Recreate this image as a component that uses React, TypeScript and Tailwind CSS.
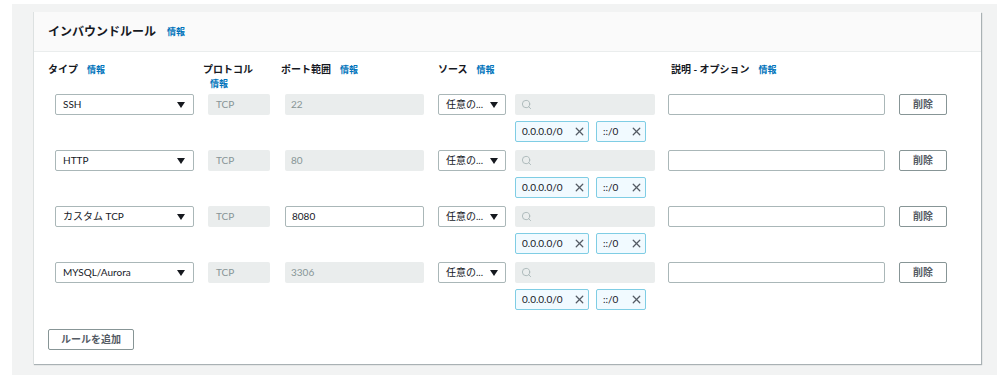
import React from 'react';
import { Search, X } from 'lucide-react';

const font = { fontFamily: 'Lato, "Noto Sans CJK JP", sans-serif' };

type Rule = { type: string; port: string; portEditable?: boolean };

const rules: Rule[] = [
  { type: 'SSH', port: '22' },
  { type: 'HTTP', port: '80' },
  { type: 'カスタム TCP', port: '8080', portEditable: true },
  { type: 'MYSQL/Aurora', port: '3306' },
];

const Info: React.FC<{ className?: string }> = ({ className = '' }) => (
  <span className={`text-[9px] font-bold text-[#0073bb] ${className}`}>情報</span>
);

const Caret = () => (
  <svg width="8" height="6" viewBox="0 0 8 6" className="shrink-0">
    <path d="M0 0 L8 0 L4 6 Z" fill="#16191f" />
  </svg>
);

const Tag: React.FC<{ label: string; w: string }> = ({ label, w }) => (
  <div
    className={`${w} h-[21px] flex items-center justify-between pl-[6px] pr-[2px] bg-[#f1faff] border border-[#7fcde4] rounded-[2px] text-[10px] text-[#16191f]`}
  >
    <span>{label}</span>
    <X size={13} strokeWidth={2.4} className="text-[#545b64]" />
  </div>
);

const RuleRow: React.FC<{ rule: Rule }> = ({ rule }) => (
  <div className="flex items-start h-[56px]">
    <div className="ml-[7px] w-[139px] h-[21px] flex items-center justify-between pl-[7px] pr-[8px] border border-[#aab7b8] rounded-[2px] bg-white text-[10px] text-[#16191f]">
      <span>{rule.type}</span>
      <Caret />
    </div>
    <div className="ml-[14px] w-[62px] h-[21px] flex items-center px-[8px] bg-[#eaeded] rounded-[2px] text-[10px] text-[#879596]">
      TCP
    </div>
    {rule.portEditable ? (
      <div className="ml-[15px] w-[139px] h-[21px] flex items-center px-[6px] border border-[#aab7b8] rounded-[2px] bg-white text-[10px] text-[#16191f]">
        {rule.port}
      </div>
    ) : (
      <div className="ml-[15px] w-[139px] h-[21px] flex items-center px-[6px] bg-[#eaeded] rounded-[2px] text-[10px] text-[#879596]">
        {rule.port}
      </div>
    )}
    <div className="ml-[14px] w-[68px] h-[21px] flex items-center justify-between pl-[7px] pr-[7px] border border-[#aab7b8] rounded-[2px] bg-white text-[10px] text-[#16191f]">
      <span>任意の...</span>
      <Caret />
    </div>
    <div className="ml-[9px] w-[140px] flex flex-col gap-[6px]">
      <div className="h-[21px] flex items-center px-[6px] bg-[#eaeded] rounded-[2px]">
        <Search size={11} strokeWidth={2} className="text-[#aab7b8]" />
      </div>
      <div className="flex gap-[7px]">
        <Tag label="0.0.0.0/0" w="w-[74px]" />
        <Tag label="::/0" w="w-[50px]" />
      </div>
    </div>
    <div className="ml-[13px] w-[217px] h-[21px] border border-[#aab7b8] rounded-[2px] bg-white" />
    <button className="ml-[14px] w-[48px] h-[21px] flex items-center justify-center border border-[#879596] rounded-[2px] bg-white text-[10px] font-bold text-[#545b64]">
      削除
    </button>
  </div>
);

export default function App() {
  return (
    <div className="w-[1001px] h-[375px] bg-white pl-[12px] pt-[4px] pr-[4px]" style={font}>
      <div className="h-full bg-[#f2f3f3] pl-[21px] pr-[16px] pt-[8px]">
        <div className="w-[948px] bg-white border-l border-[#dde1e1] shadow-[1px_1px_1px_rgba(0,28,36,0.3)]">
          <div className="h-[40px] flex items-center gap-[11px] px-[14px] bg-[#fafafa] border-b border-[#eaeded]">
            <span className="text-[12px] font-bold text-[#16191f]">インバウンドルール</span>
            <Info />
          </div>
          <div className="px-[14px] pt-[10px] pb-[14px]">
            <div className="flex items-start h-[32px] text-[10px] font-bold text-[#16191f]">
              <div className="w-[155px] flex items-center gap-[9px]">
                <span>タイプ</span>
                <Info />
              </div>
              <div className="w-[78px] flex flex-col">
                <span>プロトコル</span>
                <Info className="ml-[7px]" />
              </div>
              <div className="w-[157px] flex items-center gap-[9px]">
                <span>ポート範囲</span>
                <Info />
              </div>
              <div className="w-[233px] flex items-center gap-[9px]">
                <span>ソース</span>
                <Info />
              </div>
              <div className="flex items-center gap-[9px]">
                <span>説明 - オプション</span>
                <Info />
              </div>
            </div>
            {rules.map((r, i) => (
              <RuleRow key={i} rule={r} />
            ))}
            <button className="mt-[11px] w-[86px] h-[21px] flex items-center justify-center border border-[#879596] rounded-[2px] bg-white text-[10px] font-bold text-[#545b64]">
              ルールを追加
            </button>
          </div>
        </div>
      </div>
    </div>
  );
}
